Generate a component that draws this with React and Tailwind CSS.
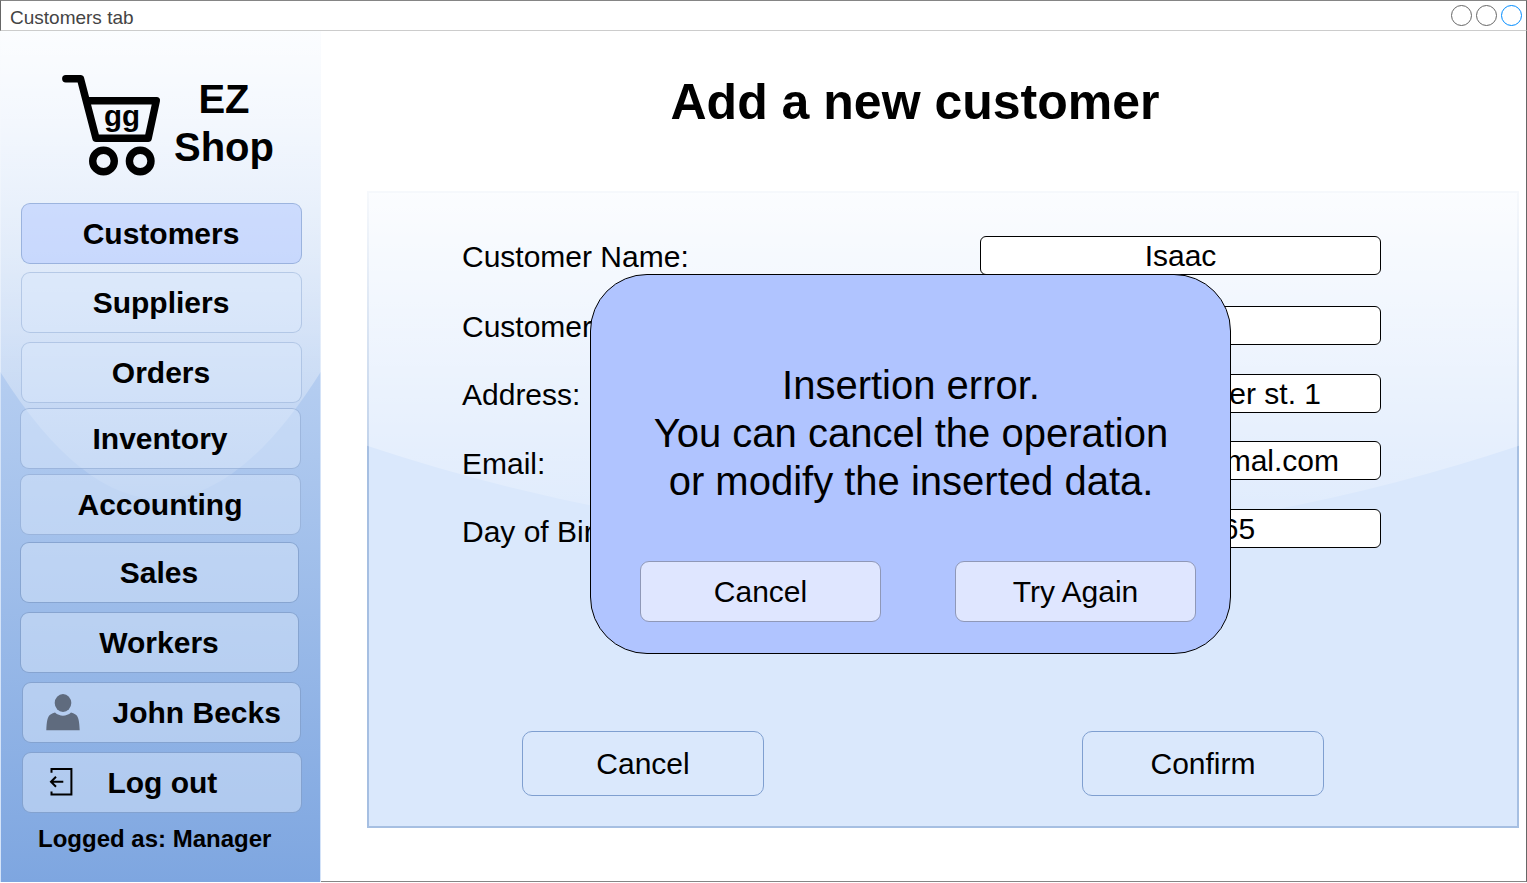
const navItems = [
  { label: 'Customers', box: 'ml-[21px] w-[281px] bg-[#b0c5ff]/50 border-[#6c8ebf]/50' },
  { label: 'Suppliers', box: 'mt-2 ml-[21px] w-[281px] bg-[#dae8fc]/50 border-[#6c8ebf]/35' },
  { label: 'Orders', box: 'mt-[9px] ml-[21px] w-[281px] bg-[#dae8fc]/50 border-[#6c8ebf]/35' },
  { label: 'Inventory', box: 'mt-[5px] ml-[20px] w-[281px] bg-[#dae8fc]/50 border-[#6c8ebf]/45' },
  { label: 'Accounting', box: 'mt-[5px] ml-[20px] w-[281px] bg-[#dae8fc]/50 border-[#6c8ebf]/45' },
  { label: 'Sales', box: 'mt-[7px] ml-[20px] w-[279px] bg-[#dae8fc]/50 border-[#6c8ebf]/65' },
  { label: 'Workers', box: 'mt-[9px] ml-[20px] w-[279px] bg-[#dae8fc]/50 border-[#6c8ebf]/65' },
];

const fields = [
  { label: 'Customer Name:', value: 'Isaac', row: '', text: 'mt-[3px]', input: 'justify-center' },
  { label: 'Customer Surname:', value: '', row: 'mt-[31px]', text: 'mt-[3px]', input: 'justify-center' },
  { label: 'Address:', value: 'Silver st. 1', row: 'mt-[29px]', text: 'mt-[3px]', input: 'justify-end pr-[59px]' },
  { label: 'Email:', value: 'is@gmal.com', row: 'mt-[28px]', text: 'mt-[5px] -mb-px', input: 'justify-end pr-[41px]' },
  { label: 'Day of Birth:', value: '10/03/1965', row: 'mt-[29px]', text: 'mt-[5px] -mb-px', input: 'justify-center pr-px' },
];

/* Glossy highlight: a white fade ending in a downward curve. */
function Gloss({ id }) {
  return (
    <svg className="pointer-events-none absolute inset-0 h-full w-full" viewBox="0 0 100 100" preserveAspectRatio="none">
      <defs>
        <linearGradient id={id} x1="0" y1="0" x2="0" y2="1">
          <stop offset="0" stopColor="#fff" stopOpacity="0.9" />
          <stop offset="1" stopColor="#fff" stopOpacity="0.1" />
        </linearGradient>
      </defs>
      <path d="M0 0V40Q50 70 100 40V0Z" fill={`url(#${id})`} />
    </svg>
  );
}

function Logo() {
  return (
    <div className="relative ml-[61px] mt-[42px] flex h-[106px] w-[220px]">
      <svg width="102" height="106" viewBox="61 73 102 106" fill="none" stroke="#000" strokeWidth="7.4" strokeLinecap="round" strokeLinejoin="round">
        <path d="M65.8 78.7H80.5L96 138.2H148.2L156.3 100.7H87" />
        <circle cx="103.5" cy="161" r="10.8" />
        <circle cx="140.2" cy="161" r="10.8" />
      </svg>
      <span className="absolute left-[43px] top-[25px] text-[29.5px] leading-[36px] font-bold">gg</span>
      <div className="ml-[8px] mt-[2px] w-[106px] text-center text-[40px] leading-[48px] font-bold">
        EZ
        <br />
        Shop
      </div>
    </div>
  );
}

function PersonIcon() {
  return (
    <svg className="-mt-[2px] shrink-0" width="36" height="38" viewBox="45 693 36 38" fill="#5f6b7e">
      <ellipse cx="63" cy="703" rx="8.3" ry="9" />
      <path d="M46.3 730.2C46.6 722 47.5 716 50.5 714.5C52 713.6 53.5 713 55 712.6C59.5 716.8 66.5 716.8 71 712.6C72.5 713 74 713.6 75.5 714.5C78.5 716 79.4 722 79.7 730.2Z" />
    </svg>
  );
}

function LogoutIcon() {
  return (
    <svg className="-mt-[2px] shrink-0" width="26" height="30" viewBox="48 767 26 30" fill="none" stroke="#000" strokeWidth="2">
      <path d="M51.5 772.8V768.9H71.4V794.4H51.5V791.5" />
      <path d="M63.3 781.8H51M56 776.8L51 781.8L56 786.8" />
    </svg>
  );
}

export default function App() {
  return (
    <div className="relative flex h-[883px] w-[1527px] flex-col overflow-hidden bg-white font-['Liberation_Sans',Arial,sans-serif] text-black">
      <header className="flex h-[31px] shrink-0 items-center justify-between border-x border-t border-b border-t-[#858585] border-x-[#666] border-b-[#ccc] pr-1 pl-[9px]">
        <span className="mt-[3px] text-[19px] leading-none text-[#444]">Customers tab</span>
        <div className="flex gap-1">
          <i className="h-[21px] w-[21px] rounded-full border border-[#666]" />
          <i className="h-[21px] w-[21px] rounded-full border border-[#666]" />
          <i className="h-[21px] w-[21px] rounded-full border border-[#008cff]" />
        </div>
      </header>

      <div className="flex h-[852px]">
        <aside className="relative h-[851px] w-[321px] shrink-0 border-x border-[#d4e3f8] bg-linear-to-b/srgb from-[#dae8fc] to-[#7ea6e0]">
          <div className="absolute -inset-x-px top-0 bottom-0">
            <Gloss id="gloss-side" />
          </div>
          <div className="relative -ml-px flow-root w-[321px]">
            <Logo />
            <nav className="mt-6 flex flex-col text-[30px] leading-[36px] font-bold">
              {navItems.map((n) => (
                <a key={n.label} className={`flex h-[61px] items-center justify-center rounded-[9px] border ${n.box}`}>
                  <span className="-ml-px">{n.label}</span>
                </a>
              ))}
              <a className="mt-[9px] ml-[22px] flex h-[61px] w-[279px] items-center rounded-[9px] border border-[#6c8ebf]/65 bg-[#dae8fc]/50 pl-[22px]">
                <PersonIcon />
                <span className="ml-[31.5px] whitespace-nowrap">John Becks</span>
              </a>
              <a className="mt-[9px] ml-[22px] flex h-[61px] w-[280px] items-center rounded-[9px] border border-[#6c8ebf]/65 bg-[#dae8fc]/50 pl-[25px]">
                <LogoutIcon />
                <span className="ml-[33.4px]">Log out</span>
              </a>
            </nav>
            <p className="mt-[11px] ml-[38px] text-[24px] leading-[29px] font-bold">Logged as: Manager</p>
          </div>
        </aside>

        <main className="flex h-[851px] flex-1 flex-col border-r border-b border-r-[#666] border-b-[#858585]">
          <h1 className="mt-[41px] ml-[46px] w-[1096px] text-center text-[50px] leading-[60px] font-bold">Add a new customer</h1>
          <section className="relative mt-[59px] ml-[46px] h-[637px] w-[1152px] border-2 border-[#a6bfe2] bg-[#dae8fc]">
            <div className="absolute -inset-[2px]">
              <Gloss id="gloss-main" />
            </div>
            <div className="relative flow-root pt-[43px]">
              {fields.map((f) => (
                <div key={f.label} className={`ml-[93px] flex h-[39px] w-[919px] items-center justify-between text-[30px] leading-[36px] ${f.row}`}>
                  <span className={f.text}>{f.label}</span>
                  <div className={`flex h-[39px] w-[401px] items-center rounded-[6px] border border-black bg-white ${f.input}`}>{f.value}</div>
                </div>
              ))}
              <div className="mt-[183px] ml-[153px] flex gap-[318px] text-[30px] leading-[36px]">
                <button className="h-[65px] w-[242px] rounded-[10px] border border-[#7f9fd0] bg-[#dae8fc]">Cancel</button>
                <button className="h-[65px] w-[242px] rounded-[10px] border border-[#7f9fd0] bg-[#dae8fc]">Confirm</button>
              </div>
            </div>
          </section>
        </main>
      </div>

      <div role="dialog" className="absolute top-[274px] left-[590px] flex h-[380px] w-[641px] flex-col rounded-[57px] border border-black bg-[#b0c4ff]">
        <p className="mt-[86px] ml-px text-center text-[40px] leading-[48px]">
          Insertion error.
          <br />
          You can cancel the operation
          <br />
          or modify the inserted data.
        </p>
        <div className="mt-[56px] ml-[49px] flex gap-[74px] text-[30px] leading-[36px]">
          <button className="h-[61px] w-[241px] rounded-[9px] border border-[#8f98b8] bg-[#dfe6ff]">Cancel</button>
          <button className="h-[61px] w-[241px] rounded-[9px] border border-[#8f98b8] bg-[#dfe6ff]">Try Again</button>
        </div>
      </div>
    </div>
  );
}
